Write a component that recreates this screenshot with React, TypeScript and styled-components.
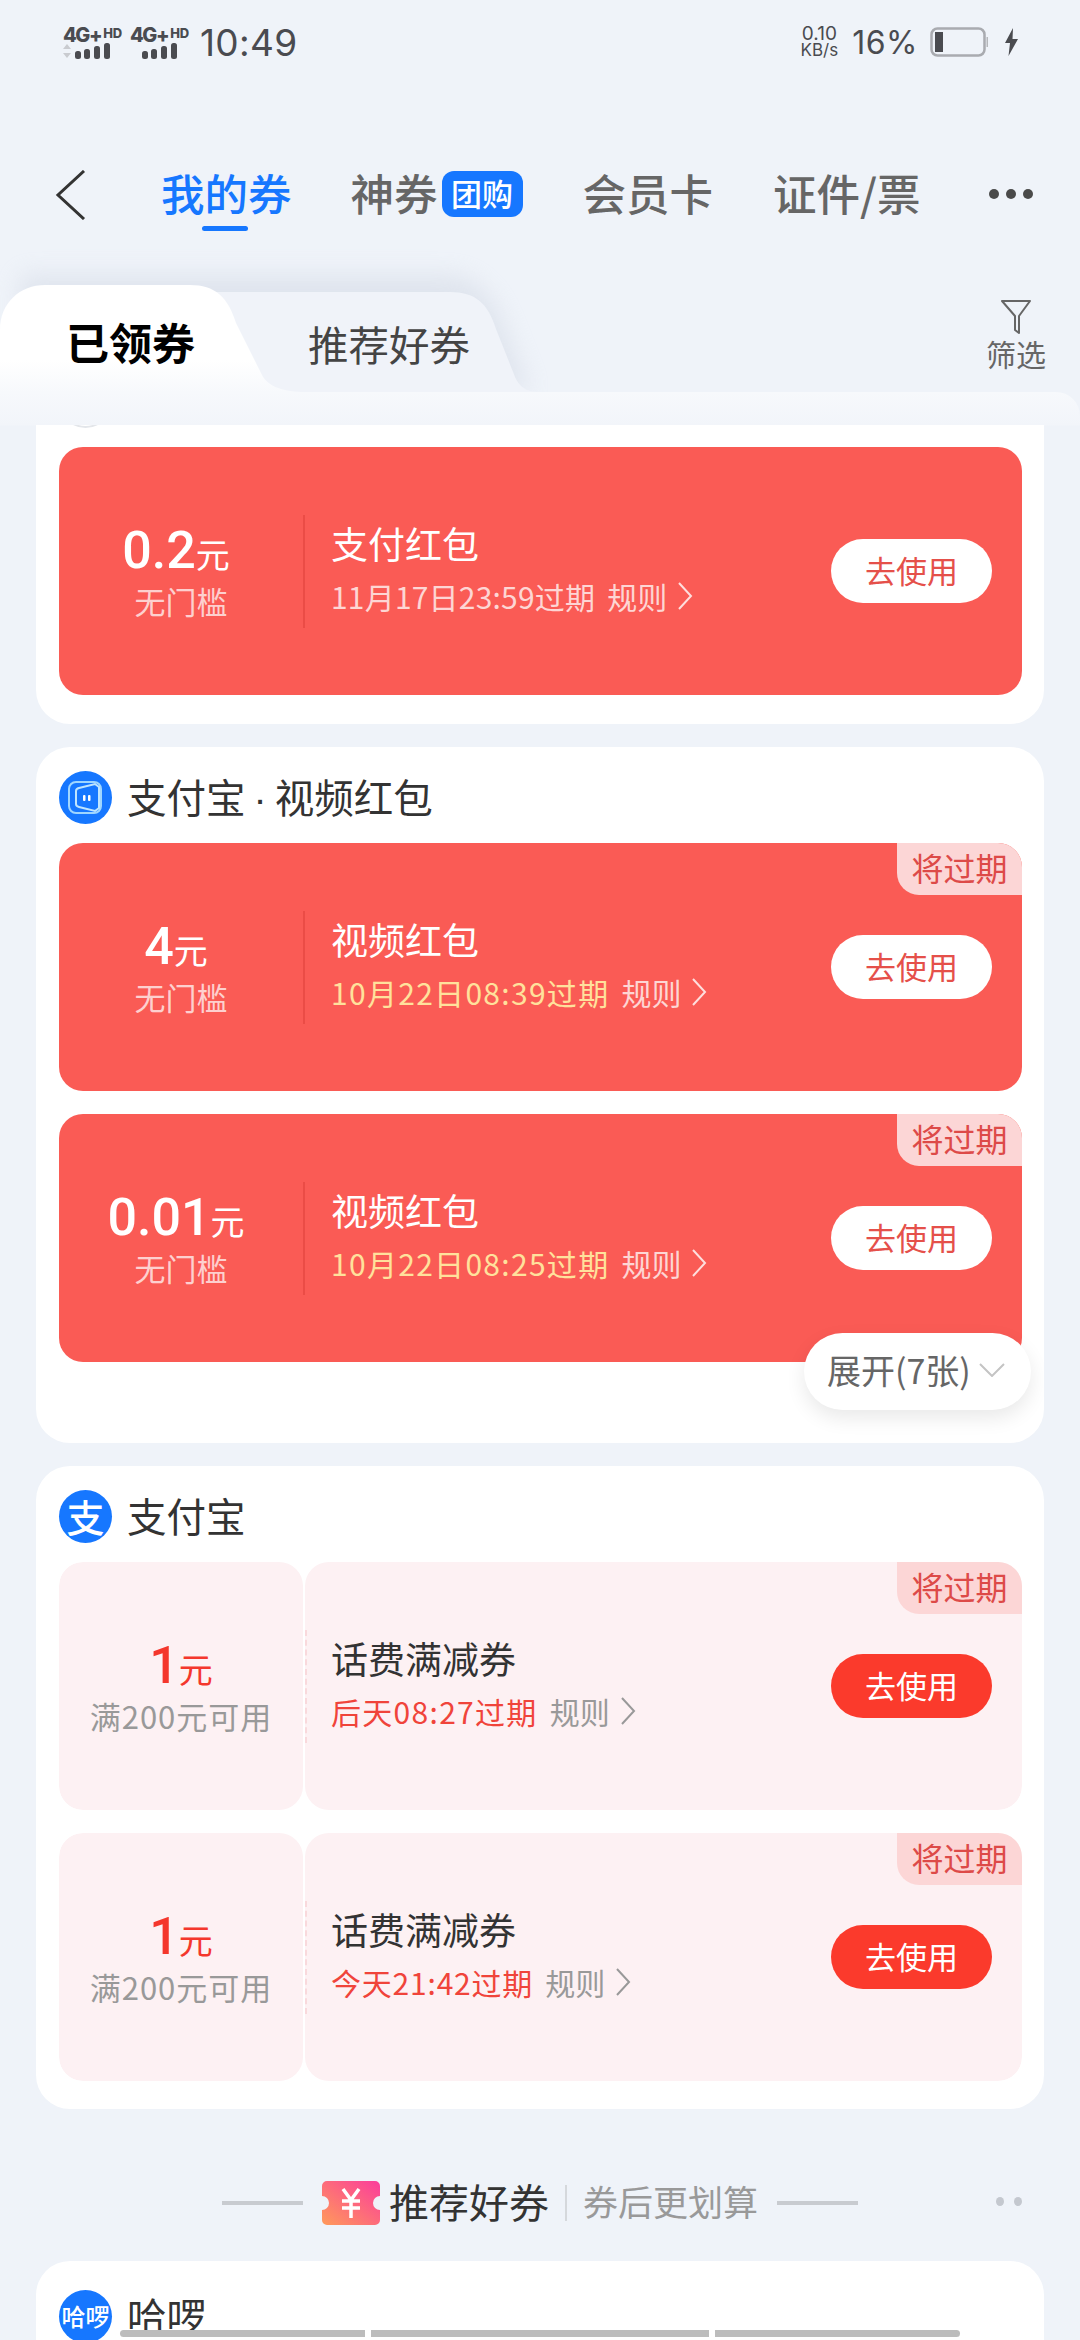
import React from "react";
import styled, { createGlobalStyle } from "styled-components";

const Global = createGlobalStyle`
  html, body { margin: 0; padding: 0; background: #eff3f9; }
  * { box-sizing: border-box; }
`;

const Page = styled.div`
  position: relative;
  width: 1080px;
  height: 2340px;
  overflow: hidden;
  background: #eff3f9;
  display: flex;
  flex-direction: column;
  font-family: "Noto Sans CJK SC", "Noto Sans", sans-serif;
`;

/* status bar */
const StatusBar = styled.div`
  height: 84px;
  padding: 0 61px 0 63px;
  display: flex;
  align-items: center;
  justify-content: space-between;
  color: #4a4b50;
  font-family: Inter, sans-serif;
`;
const StatusSide = styled.div`
  display: flex;
  align-items: center;
`;
const SignalBox = styled.div`
  width: 58px;
  margin-right: 9px;
  display: flex;
  flex-direction: column;
  align-items: flex-start;
  line-height: 1;
`;
const SignalLabel = styled.div`
  font-size: 20px;
  font-weight: 800;
  height: 17px;
  line-height: 17px;
  letter-spacing: -1.4px;
  white-space: nowrap;
  small {
    font-size: 13px;
    font-weight: 800;
    vertical-align: 4px;
    margin-left: 2px;
    letter-spacing: -0.4px;
  }
`;
const Time = styled.div`
  font-size: 37px;
  font-weight: 400;
  margin-left: 3px;
  letter-spacing: 0.3px;
`;
const Speed = styled.div`
  font-size: 19px;
  line-height: 16px;
  text-align: center;
  margin-right: 14px;
  small {
    font-size: 17px;
  }
`;
const Percent = styled.div`
  font-size: 32px;
  margin-right: 12px;
  letter-spacing: 0.5px;
`;

/* nav */
const Nav = styled.div`
  height: 110px;
  margin-top: 56px;
  padding-left: 55px;
  display: flex;
  align-items: center;
`;
const NavTab = styled.div<{ $active?: boolean; $left: number }>`
  position: relative;
  margin-left: ${(p) => p.$left}px;
  margin-top: -4px;
  font-size: 43.5px;
  line-height: 56px;
  font-weight: 500;
  white-space: nowrap;
  color: ${(p) => (p.$active ? "#1677ff" : "#666666")};
`;
const Underline = styled.div`
  position: absolute;
  left: 41px;
  bottom: -10px;
  width: 46px;
  height: 5px;
  border-radius: 3px;
  background: #1677ff;
`;
const Badge = styled.div`
  margin-left: 4px;
  margin-top: -3px;
  width: 81px;
  height: 46px;
  border-radius: 12px;
  background: #1677ff;
  color: #fff;
  font-size: 31px;
  line-height: 44px;
  text-align: center;
  font-weight: 500;
`;
const NavDots = styled.div`
  margin-left: 69px;
  margin-top: -2px;
  display: flex;
  gap: 7px;
`;
const NavDot = styled.span`
  width: 10px;
  height: 10px;
  border-radius: 50%;
  background: #4a4a4a;
`;

/* sub tabs */
const SubTabs = styled.div`
  position: relative;
  margin-top: 35px;
  height: 107px;
  display: flex;
  align-items: center;
`;
const TabShape = styled.svg`
  position: absolute;
  left: 0;
  top: -40px;
  overflow: visible;
`;
const ActiveTab = styled.div`
  position: relative;
  margin-left: 66px;
  margin-top: 5px;
  font-size: 43px;
  font-weight: 700;
  color: #000;
  line-height: 56px;
`;
const IdleTab = styled.div`
  position: relative;
  margin-left: 113px;
  margin-top: 11px;
  font-size: 40.5px;
  color: #444;
  line-height: 54px;
`;
const Filter = styled.div`
  position: absolute;
  right: 34px;
  top: 14px;
  display: flex;
  flex-direction: column;
  align-items: center;
  color: #666;
  font-size: 30px;
  line-height: 36px;
`;

/* panel */
const Panel = styled.div`
  position: relative;
  z-index: 2;
  flex: 1;
  min-height: 0;
  display: flex;
  flex-direction: column;
  padding: 33px 36px 0;
  border-top-right-radius: 24px;
  background: linear-gradient(#f7f9fc 0, #f2f5fa 33px, #eff3f9 34px);
`;
const Scroller = styled.div`
  flex: 1;
  min-height: 0;
  overflow: hidden;
`;
const Card = styled.div<{ $clipped?: boolean; $bottom: number; $mt?: number }>`
  position: relative;
  margin-top: ${(p) => p.$mt ?? 23}px;
  padding: 0 22px ${(p) => p.$bottom}px 23px;
  background: #fff;
  border-radius: ${(p) => (p.$clipped ? "0 0 34px 34px" : "34px")};
`;
const CardHeader = styled.div<{ $pad?: number }>`
  height: 96px;
  display: flex;
  align-items: center;
  gap: 15px;
  font-size: 39.5px;
  color: #333;
  padding-top: ${(p) => p.$pad ?? 4}px;
`;
const HeaderText = styled.span`
  margin-top: -3px;
  white-space: nowrap;
`;
const NameDot = styled.span`
  font-family: "Liberation Sans", sans-serif;
  margin: 0 8px;
`;
const LogoCircle = styled.div<{ $ghost?: boolean }>`
  width: 53px;
  height: 53px;
  border-radius: 50%;
  background: ${(p) => (p.$ghost ? "#fff" : "#1677ff")};
  border: ${(p) => (p.$ghost ? "2px solid #e3e6ea" : "0")};
  color: #fff;
  display: flex;
  align-items: center;
  justify-content: center;
  flex: none;
`;
const LogoChar = styled.span<{ $size: number }>`
  font-size: ${(p) => p.$size}px;
  font-weight: 500;
  line-height: 1;
  white-space: nowrap;
`;
const CouponList = styled.div`
  display: flex;
  flex-direction: column;
  gap: 23px;
`;
const Coupon = styled.div<{ $light?: boolean }>`
  position: relative;
  height: 248px;
  display: flex;
  overflow: hidden;
  border-radius: 24px;
  background: ${(p) => (p.$light ? "transparent" : "#fa5b55")};
`;
const Left = styled.div<{ $light?: boolean }>`
  width: 244px;
  flex: none;
  display: flex;
  flex-direction: column;
  align-items: center;
  justify-content: center;
  border-radius: 24px;
  background: ${(p) => (p.$light ? "#fdf1f3" : "transparent")};
`;
const Amount = styled.div<{ $light?: boolean }>`
  display: flex;
  align-items: baseline;
  justify-content: center;
  height: 58px;
  line-height: 58px;
  color: ${(p) => (p.$light ? "#f4372c" : "#fff")};
  font-family: Roboto, sans-serif;
  font-size: 52px;
  font-weight: 500;
  margin-top: 2px;
  margin-left: ${(p) => (p.$light ? 0 : -10)}px;
  span {
    font-family: "Noto Sans CJK SC", sans-serif;
    font-size: 34px;
    font-weight: 400;
    margin-left: 0;
  }
`;
const Threshold = styled.div<{ $light?: boolean }>`
  margin-top: -1px;
  font-size: 31px;
  line-height: 44px;
  white-space: nowrap;
  letter-spacing: ${(p) => (p.$light ? 1 : 0)}px;
  color: ${(p) => (p.$light ? "#999" : "rgba(255,255,255,.72)")};
`;
const Right = styled.div<{ $light?: boolean }>`
  flex: 1;
  display: flex;
  align-items: center;
  margin-left: ${(p) => (p.$light ? 2 : 0)}px;
  padding: 0 30px 0 ${(p) => (p.$light ? 26 : 28)}px;
  border-radius: 24px;
  position: relative;
  background: ${(p) => (p.$light ? "#fdf1f3" : "transparent")};
  &::before {
    content: "";
    position: absolute;
    left: 0;
    top: 68px;
    height: 113px;
    border-left: 2px ${(p) => (p.$light ? "dashed #f9d9dc" : "solid #eb4c46")};
  }
`;
const Info = styled.div`
  flex: 1;
  min-width: 0;
`;
const Title = styled.div<{ $light?: boolean }>`
  font-size: 37px;
  line-height: 48px;
  margin-top: -7px;
  color: ${(p) => (p.$light ? "#333" : "#fff")};
`;
const Meta = styled.div`
  margin-top: 9px;
  display: flex;
  align-items: center;
  font-size: 30px;
  line-height: 40px;
  white-space: nowrap;
`;
const Expiry = styled.span<{ $tone: string; $spacing: number }>`
  color: ${(p) => p.$tone};
  letter-spacing: ${(p) => p.$spacing}px;
`;
const Rule = styled.span<{ $light?: boolean }>`
  margin-left: 12px;
  display: flex;
  align-items: center;
  gap: 10px;
  color: ${(p) => (p.$light ? "#999" : "rgba(255,255,255,.75)")};
`;
const UseButton = styled.div<{ $light?: boolean }>`
  width: 161px;
  height: 64px;
  flex: none;
  border-radius: 32px;
  font-size: 31px;
  line-height: 62px;
  text-align: center;
  background: ${(p) => (p.$light ? "#fb3a2c" : "#fff")};
  color: ${(p) => (p.$light ? "#fff" : "#e5504a")};
`;
const Tag = styled.div`
  position: absolute;
  right: 0;
  top: 0;
  width: 125px;
  height: 52px;
  border-bottom-left-radius: 22px;
  background: #fcd6d6;
  color: #dd4a48;
  font-size: 32px;
  line-height: 48px;
  text-align: center;
  z-index: 1;
`;
const Expand = styled.div`
  position: absolute;
  right: 13px;
  bottom: 33px;
  width: 227px;
  height: 77px;
  border-radius: 39px;
  background: #fff;
  box-shadow: 0 8px 20px rgba(0, 0, 0, 0.09);
  display: flex;
  align-items: center;
  padding: 0 0 4px 23px;
  gap: 8px;
  font-size: 34px;
  color: #666;
  white-space: nowrap;
`;

/* section heading */
const Section = styled.div`
  position: relative;
  height: 152px;
  padding: 73px 186px 0;
  display: flex;
  align-items: flex-start;
`;
const Rule2 = styled.div`
  width: 81px;
  height: 4px;
  margin-top: 19px;
  background: #c8cbd0;
  flex: none;
`;
const SectionTitle = styled.div`
  margin-left: 9px;
  margin-top: -3px;
  font-size: 40px;
  line-height: 44px;
  color: #333;
  white-space: nowrap;
`;
const SectionDivider = styled.div`
  width: 2px;
  height: 36px;
  margin: 3px 16px 0;
  background: #d5d8dc;
`;
const SectionSub = styled.div`
  font-size: 35px;
  line-height: 44px;
  margin-top: -3px;
  color: #999;
  white-space: nowrap;
  margin-right: 19px;
`;
const SectionIcon = styled.svg`
  margin-left: 19px;
  margin-top: -1px;
  flex: none;
`;
const PageDots = styled.div`
  position: absolute;
  right: 22px;
  top: 88px;
  display: flex;
  gap: 10px;
`;
const PageDot = styled.span`
  width: 8px;
  height: 9px;
  border-radius: 50%;
  background: #c4c8cf;
`;
const GestureBars = styled.div`
  position: absolute;
  left: 120px;
  bottom: 3px;
  display: flex;
  gap: 6px;
  height: 7px;
  z-index: 5;
`;
const GestureBar = styled.div<{ $w: number; $edge?: "l" | "r" }>`
  width: ${(p) => p.$w}px;
  background: #bcbcbc;
  border-radius: ${(p) =>
    p.$edge === "l" ? "4px 0 0 4px" : p.$edge === "r" ? "0 4px 4px 0" : "0"};
`;

const Chevron = ({ color }: { color: string }) => (
  <svg width="16" height="30" viewBox="0 0 16 30" fill="none">
    <path d="M2 2l12 13L2 28" stroke={color} strokeWidth="2" />
  </svg>
);

const Bars = ({ arrows }: { arrows?: boolean }) => (
  <svg width="50" height="18" viewBox="0 0 50 18" fill="#4a4b50">
    {arrows && <path d="M0 7l4-5 4 5z M0 11l4 5 4-5z" fill="#c9cbd0" />}
    <rect x="12" y="9" width="6" height="8" rx="2.5" />
    <rect x="21" y="7" width="6" height="10" rx="2.5" />
    <rect x="31" y="4" width="6" height="13" rx="2.5" />
    <rect x="41" y="1" width="6" height="16" rx="2.5" />
  </svg>
);

const VideoLogo = () => (
  <svg width="53" height="53" viewBox="0 0 53 53" fill="none">
    <circle cx="26.5" cy="26.5" r="26.5" fill="#1677ff" />
    <rect x="10" y="11" width="32" height="31" rx="7" stroke="#9fd6ff" strokeWidth="2" />
    <path d="M20 17l16-4 4 3v21l-4 3-16-4c-2-.5-3-1.5-3-3V20c0-1.500 1-2.500 3-3z" fill="#1677ff" stroke="#bfe5ff" strokeWidth="2" />
    <rect x="24" y="24" width="2.500" height="6" rx="1" fill="#fff" />
    <rect x="29" y="24" width="2.500" height="6" rx="1" fill="#fff" />
  </svg>
);

type CouponData = {
  amount: string;
  threshold: string;
  title: string;
  expiry: string;
  tone: string;
  spacing?: number;
  tag?: boolean;
  light?: boolean;
};

const CouponRow = ({ c }: { c: CouponData }) => (
  <Coupon $light={c.light}>
    {c.tag && <Tag>将过期</Tag>}
    <Left $light={c.light}>
      <Amount $light={c.light}>
        {c.amount}
        <span>元</span>
      </Amount>
      <Threshold $light={c.light}>{c.threshold}</Threshold>
    </Left>
    <Right $light={c.light}>
      <Info>
        <Title $light={c.light}>{c.title}</Title>
        <Meta>
          <Expiry $tone={c.tone} $spacing={c.spacing ?? 1.3}>
            {c.expiry}
          </Expiry>
          <Rule $light={c.light}>
            规则
            <Chevron color={c.light ? "#999" : "rgba(255,255,255,.8)"} />
          </Rule>
        </Meta>
      </Info>
      <UseButton $light={c.light}>去使用</UseButton>
    </Right>
  </Coupon>
);

const white = "rgba(255,255,255,.75)";
const yellow = "#ffe19c";
const red = "#f0443a";

export default function App() {
  return (
    <Page>
      <Global />
      <StatusBar>
        <StatusSide>
          <SignalBox>
            <SignalLabel>
              4G+<small>HD</small>
            </SignalLabel>
            <Bars arrows />
          </SignalBox>
          <SignalBox>
            <SignalLabel>
              4G+<small>HD</small>
            </SignalLabel>
            <Bars />
          </SignalBox>
          <Time>10:49</Time>
        </StatusSide>
        <StatusSide>
          <Speed>
            0.10
            <br />
            <small>KB/s</small>
          </Speed>
          <Percent>16%</Percent>
          <svg width="58" height="30" viewBox="0 0 58 30" fill="none">
            <rect x="1.500" y="1.500" width="53" height="27" rx="6" stroke="#a9abb0" strokeWidth="2.500" />
            <rect x="5" y="5" width="8" height="20" fill="#4a4b50" />
            <rect x="56.500" y="10" width="1.500" height="10" fill="#b5b7bb" />
          </svg>
          <svg width="15" height="28" viewBox="0 0 15 28" fill="#4a4b50" style={{ marginLeft: 16 }}>
            <path d="M9 0L1 15h5l-1.500 13L14 11H8.500z" />
          </svg>
        </StatusSide>
      </StatusBar>

      <Nav>
        <svg width="32" height="50" viewBox="0 0 32 50" fill="none">
          <path d="M29 1L3 25l26 24" stroke="#333" strokeWidth="3" />
        </svg>
        <NavTab $active $left={74}>
          我的券
          <Underline />
        </NavTab>
        <NavTab $left={59}>神券</NavTab>
        <Badge>团购</Badge>
        <NavTab $left={60}>会员卡</NavTab>
        <NavTab $left={60}>证件/票</NavTab>
        <NavDots>
          <NavDot />
          <NavDot />
          <NavDot />
        </NavDots>
      </Nav>

      <SubTabs>
        <TabShape width="560" height="147" viewBox="0 0 560 147" fill="none">
          <defs>
            <linearGradient id="wt" x1="0" y1="0" x2="0" y2="1">
              <stop offset="0" stopColor="#ffffff" />
              <stop offset="0.7" stopColor="#ffffff" />
              <stop offset="1" stopColor="#f7f9fc" />
            </linearGradient>
            <filter id="ts" x="-20%" y="-40%" width="140%" height="160%">
              <feGaussianBlur stdDeviation="12" />
            </filter>
          </defs>
          <path d="M20 30H450C475 30 495 52 505 84L530 147H20Z" fill="#c9d0de" opacity=".42" filter="url(#ts)" />
          <path d="M190 47H450C475 47 488 58 496 84L515 132C519 142 528 147 537 147H190Z" fill="#f0f3f9" />
          <path d="M0 147V85C0 58 20 40 45 40H190C215 40 228 52 236 78L262 130C268 142 285 147 305 147Z" fill="url(#wt)" />
        </TabShape>
        <ActiveTab>已领券</ActiveTab>
        <IdleTab>推荐好券</IdleTab>
        <Filter>
          <svg width="32" height="36" viewBox="0 0 32 36" fill="none">
            <path d="M2 2h28L19 17v17l-4-3V17z" stroke="#666" strokeWidth="2" strokeLinejoin="round" />
          </svg>
          筛选
        </Filter>
      </SubTabs>

      <Panel>
        <Scroller>
          <Card $clipped $mt={-74} $bottom={29}>
            <CardHeader>
              <LogoCircle $ghost />
            </CardHeader>
            <CouponRow
              c={{ amount: "0.2", threshold: "无门槛", title: "支付红包", expiry: "11月17日23:59过期", tone: white, spacing: 0.2 }}
            />
          </Card>

          <Card $bottom={81}>
            <CardHeader>
              <VideoLogo />
              <HeaderText>
                支付宝<NameDot>·</NameDot>视频红包
              </HeaderText>
            </CardHeader>
            <CouponList>
              <CouponRow
                c={{ amount: "4", threshold: "无门槛", title: "视频红包", expiry: "10月22日08:39过期", tone: yellow, tag: true }}
              />
              <CouponRow
                c={{ amount: "0.01", threshold: "无门槛", title: "视频红包", expiry: "10月22日08:25过期", tone: yellow, tag: true }}
              />
            </CouponList>
            <Expand>
              展开(7张)
              <svg width="26" height="14" viewBox="0 0 26 14" fill="none">
                <path d="M1 1l12 12L25 1" stroke="#c4c4c4" strokeWidth="2" />
              </svg>
            </Expand>
          </Card>

          <Card $bottom={28}>
            <CardHeader>
              <LogoCircle>
                <LogoChar $size={38}>支</LogoChar>
              </LogoCircle>
              <HeaderText>支付宝</HeaderText>
            </CardHeader>
            <CouponList>
              <CouponRow
                c={{ amount: "1", threshold: "满200元可用", title: "话费满减券", expiry: "后天08:27过期", tone: red, tag: true, light: true }}
              />
              <CouponRow
                c={{ amount: "1", threshold: "满200元可用", title: "话费满减券", expiry: "今天21:42过期", tone: red, tag: true, light: true, spacing: 0.8 }}
              />
            </CouponList>
          </Card>

          <Section>
            <Rule2 />
            <SectionIcon width="58" height="44" viewBox="0 0 58 44">
              <defs>
                <linearGradient id="ic" x1="0" y1="1" x2="1" y2="0">
                  <stop offset="0" stopColor="#ff9a5a" />
                  <stop offset="1" stopColor="#fb3c9c" />
                </linearGradient>
              </defs>
              <path
                d="M5 0H53a5 5 0 0 1 5 5V15a7 7 0 0 0 0 14V39a5 5 0 0 1-5 5H5a5 5 0 0 1-5-5V29a7 7 0 0 0 0-14V5a5 5 0 0 1 5-5z"
                fill="url(#ic)"
              />
              <path d="M21 8l8 11 8-11M20 20h18M20 27h18M29 19v18" stroke="#fff" strokeWidth="3.500" fill="none" />
            </SectionIcon>
            <SectionTitle>推荐好券</SectionTitle>
            <SectionDivider />
            <SectionSub>券后更划算</SectionSub>
            <Rule2 />
            <PageDots>
              <PageDot />
              <PageDot />
            </PageDots>
          </Section>

          <Card $mt={0} $bottom={40}>
            <CardHeader $pad={14}>
              <LogoCircle>
                <LogoChar $size={24}>哈啰</LogoChar>
              </LogoCircle>
              <HeaderText>哈啰</HeaderText>
            </CardHeader>
          </Card>
        </Scroller>
      </Panel>

      <GestureBars>
        <GestureBar $w={245} $edge="l" />
        <GestureBar $w={338} />
        <GestureBar $w={245} $edge="r" />
      </GestureBars>
    </Page>
  );
}
